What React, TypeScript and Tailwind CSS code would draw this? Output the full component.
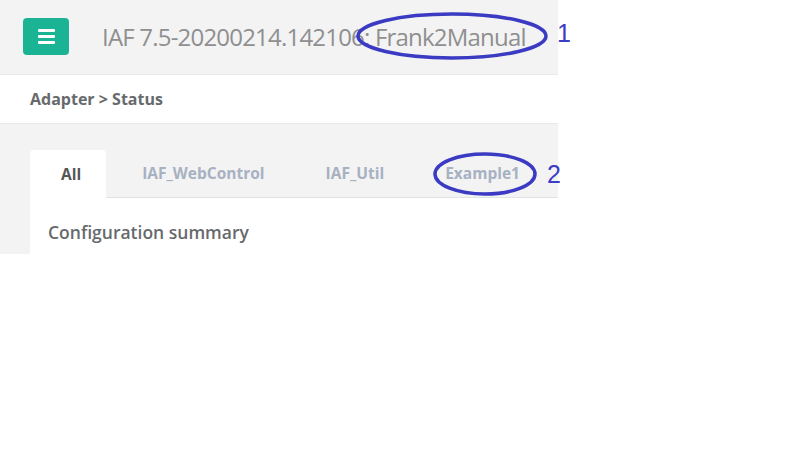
import React from "react";

export default function App() {
  const tabs = ["All", "IAF_WebControl", "IAF_Util", "Example1"];
  return (
    <div className="w-[807px] h-[466px] bg-white relative overflow-hidden" style={{ fontFamily: '"Open Sans", "Noto Sans", sans-serif' }}>
      <div className="w-[558px] bg-[#f3f3f4] flex flex-col">
        {/* Header */}
        <div className="h-[75px] flex items-center pl-[23px] border-b border-[#e7eaec]">
          <div className="w-[46px] h-[37px] rounded-[4px] bg-[#1ab394] flex flex-col items-center justify-center gap-[3px] -mt-[2px]">
            <span className="block w-[17px] h-[3px] rounded-[1px] bg-white" />
            <span className="block w-[17px] h-[3px] rounded-[1px] bg-white" />
            <span className="block w-[17px] h-[3px] rounded-[1px] bg-white" />
          </div>
          <div className="ml-[33px] text-[24px] tracking-[-0.8px] leading-none text-[#8f8f8f] whitespace-nowrap -mt-[1px]">
            IAF 7.5-20200214.142106: Frank2Manual
          </div>
        </div>
        {/* Breadcrumb */}
        <div className="h-[49px] bg-white border-b border-[#e7eaec] flex items-center px-[30px]">
          <span className="text-[16px] font-bold text-[#676a6c]">Adapter &gt; Status</span>
        </div>
        {/* Body */}
        <div className="pt-[26px] pl-[30px] h-[130px] flex flex-col">
          <div className="flex h-[48px] border-b border-[#e0e3e6] gap-[5px]">
            {tabs.map((t, i) => (
              <div
                key={t}
                className={
                  i === 0
                    ? "h-[49px] -mb-px bg-white rounded-t-[4px] pl-[31px] pr-[25px] flex items-center text-[15.5px] font-bold text-[#555555]"
                    : "h-[48px] pl-[31px] pr-[25px] flex items-center text-[15.5px] font-bold text-[#a7b1c2]"
                }
              >
                {t}
              </div>
            ))}
          </div>
          <div className="flex-1 bg-white pl-[18px] pt-[26px]">
            <div className="text-[17.5px] font-semibold text-[#676a6c] leading-none">Configuration summary</div>
          </div>
        </div>
      </div>

      {/* Annotations */}
      <svg className="absolute left-0 top-0" width="807" height="466">
        <ellipse cx="452" cy="36" rx="94" ry="22" fill="none" stroke="#3a3ac2" strokeWidth="3.5" />
        <ellipse cx="485" cy="174" rx="50" ry="20" fill="none" stroke="#3a3ac2" strokeWidth="3.5" />
      </svg>
      <div className="absolute left-[557px] top-[21px] text-[25px] leading-none text-[#3c3cc4]" style={{ fontFamily: '"Liberation Sans", sans-serif' }}>1</div>
      <div className="absolute left-[547px] top-[162px] text-[25px] leading-none text-[#3c3cc4]" style={{ fontFamily: '"Liberation Sans", sans-serif' }}>2</div>
    </div>
  );
}
